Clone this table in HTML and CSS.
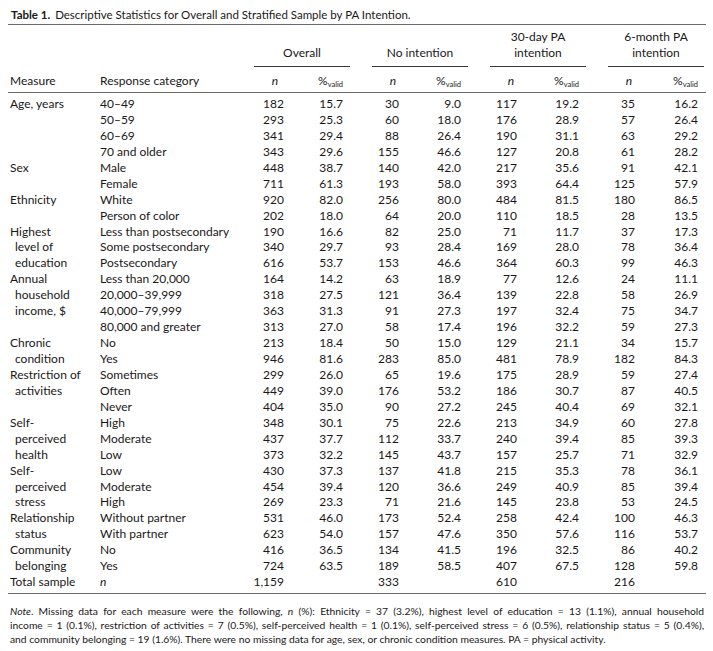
FILE: index.html
```html
<!DOCTYPE html>
<html lang="en">
<head>
<meta charset="utf-8">
<title>Table 1</title>
<link rel="stylesheet" href="styles.css">
</head>
<body>
<div class="page">
  <div class="caption"><span class="label">Table 1.</span> Descriptive Statistics for Overall and Stratified Sample by PA Intention.</div>
  <table class="stats">
    <colgroup>
      <col class="c-measure"><col class="c-cat">
      <col class="c-grp"><col class="c-grp">
      <col class="c-grp"><col class="c-grp">
      <col class="c-grp"><col class="c-grp">
      <col class="c-grp"><col class="c-last">
    </colgroup>
    <thead>
      <tr class="grp-row">
        <th></th><th></th>
        <th colspan="2" class="grp"><div class="grp-in">Overall</div></th>
        <th colspan="2" class="grp"><div class="grp-in">No intention</div></th>
        <th colspan="2" class="grp"><div class="grp-in">30-day PA<br>intention</div></th>
        <th colspan="2" class="grp grp-last"><div class="grp-in">6-month PA<br>intention</div></th>
      </tr>
      <tr class="sub-row">
        <th class="measure">Measure</th>
        <th class="cat">Response category</th>
        <th class="hn"><i>n</i></th><th class="hp">%<sub>valid</sub></th>
        <th class="hn"><i>n</i></th><th class="hp">%<sub>valid</sub></th>
        <th class="hn"><i>n</i></th><th class="hp">%<sub>valid</sub></th>
        <th class="hn"><i>n</i></th><th class="hp last">%<sub>valid</sub></th>
      </tr>
    </thead>
    <tbody>
      <tr class="first"><td class="measure">Age, years</td><td class="cat">40–49</td><td class="n n1">182</td><td class="p">15.7</td><td class="n">30</td><td class="p">9.0</td><td class="n">117</td><td class="p">19.2</td><td class="n">35</td><td class="p last">16.2</td></tr>
      <tr><td class="measure"></td><td class="cat">50–59</td><td class="n n1">293</td><td class="p">25.3</td><td class="n">60</td><td class="p">18.0</td><td class="n">176</td><td class="p">28.9</td><td class="n">57</td><td class="p last">26.4</td></tr>
      <tr><td class="measure"></td><td class="cat">60–69</td><td class="n n1">341</td><td class="p">29.4</td><td class="n">88</td><td class="p">26.4</td><td class="n">190</td><td class="p">31.1</td><td class="n">63</td><td class="p last">29.2</td></tr>
      <tr><td class="measure"></td><td class="cat">70 and older</td><td class="n n1">343</td><td class="p">29.6</td><td class="n">155</td><td class="p">46.6</td><td class="n">127</td><td class="p">20.8</td><td class="n">61</td><td class="p last">28.2</td></tr>
      <tr><td class="measure">Sex</td><td class="cat">Male</td><td class="n n1">448</td><td class="p">38.7</td><td class="n">140</td><td class="p">42.0</td><td class="n">217</td><td class="p">35.6</td><td class="n">91</td><td class="p last">42.1</td></tr>
      <tr><td class="measure"></td><td class="cat">Female</td><td class="n n1">711</td><td class="p">61.3</td><td class="n">193</td><td class="p">58.0</td><td class="n">393</td><td class="p">64.4</td><td class="n">125</td><td class="p last">57.9</td></tr>
      <tr><td class="measure">Ethnicity</td><td class="cat">White</td><td class="n n1">920</td><td class="p">82.0</td><td class="n">256</td><td class="p">80.0</td><td class="n">484</td><td class="p">81.5</td><td class="n">180</td><td class="p last">86.5</td></tr>
      <tr><td class="measure"></td><td class="cat">Person of color</td><td class="n n1">202</td><td class="p">18.0</td><td class="n">64</td><td class="p">20.0</td><td class="n">110</td><td class="p">18.5</td><td class="n">28</td><td class="p last">13.5</td></tr>
      <tr><td class="measure">Highest</td><td class="cat">Less than postsecondary</td><td class="n n1">190</td><td class="p">16.6</td><td class="n">82</td><td class="p">25.0</td><td class="n">71</td><td class="p">11.7</td><td class="n">37</td><td class="p last">17.3</td></tr>
      <tr><td class="measure cont">level of</td><td class="cat">Some postsecondary</td><td class="n n1">340</td><td class="p">29.7</td><td class="n">93</td><td class="p">28.4</td><td class="n">169</td><td class="p">28.0</td><td class="n">78</td><td class="p last">36.4</td></tr>
      <tr><td class="measure cont">education</td><td class="cat">Postsecondary</td><td class="n n1">616</td><td class="p">53.7</td><td class="n">153</td><td class="p">46.6</td><td class="n">364</td><td class="p">60.3</td><td class="n">99</td><td class="p last">46.3</td></tr>
      <tr><td class="measure">Annual</td><td class="cat">Less than 20,000</td><td class="n n1">164</td><td class="p">14.2</td><td class="n">63</td><td class="p">18.9</td><td class="n">77</td><td class="p">12.6</td><td class="n">24</td><td class="p last">11.1</td></tr>
      <tr><td class="measure cont">household</td><td class="cat">20,000–39,999</td><td class="n n1">318</td><td class="p">27.5</td><td class="n">121</td><td class="p">36.4</td><td class="n">139</td><td class="p">22.8</td><td class="n">58</td><td class="p last">26.9</td></tr>
      <tr><td class="measure cont">income, $</td><td class="cat">40,000–79,999</td><td class="n n1">363</td><td class="p">31.3</td><td class="n">91</td><td class="p">27.3</td><td class="n">197</td><td class="p">32.4</td><td class="n">75</td><td class="p last">34.7</td></tr>
      <tr><td class="measure"></td><td class="cat">80,000 and greater</td><td class="n n1">313</td><td class="p">27.0</td><td class="n">58</td><td class="p">17.4</td><td class="n">196</td><td class="p">32.2</td><td class="n">59</td><td class="p last">27.3</td></tr>
      <tr><td class="measure">Chronic</td><td class="cat">No</td><td class="n n1">213</td><td class="p">18.4</td><td class="n">50</td><td class="p">15.0</td><td class="n">129</td><td class="p">21.1</td><td class="n">34</td><td class="p last">15.7</td></tr>
      <tr><td class="measure cont">condition</td><td class="cat">Yes</td><td class="n n1">946</td><td class="p">81.6</td><td class="n">283</td><td class="p">85.0</td><td class="n">481</td><td class="p">78.9</td><td class="n">182</td><td class="p last">84.3</td></tr>
      <tr><td class="measure">Restriction of</td><td class="cat">Sometimes</td><td class="n n1">299</td><td class="p">26.0</td><td class="n">65</td><td class="p">19.6</td><td class="n">175</td><td class="p">28.9</td><td class="n">59</td><td class="p last">27.4</td></tr>
      <tr><td class="measure cont">activities</td><td class="cat">Often</td><td class="n n1">449</td><td class="p">39.0</td><td class="n">176</td><td class="p">53.2</td><td class="n">186</td><td class="p">30.7</td><td class="n">87</td><td class="p last">40.5</td></tr>
      <tr><td class="measure"></td><td class="cat">Never</td><td class="n n1">404</td><td class="p">35.0</td><td class="n">90</td><td class="p">27.2</td><td class="n">245</td><td class="p">40.4</td><td class="n">69</td><td class="p last">32.1</td></tr>
      <tr><td class="measure">Self-</td><td class="cat">High</td><td class="n n1">348</td><td class="p">30.1</td><td class="n">75</td><td class="p">22.6</td><td class="n">213</td><td class="p">34.9</td><td class="n">60</td><td class="p last">27.8</td></tr>
      <tr><td class="measure cont">perceived</td><td class="cat">Moderate</td><td class="n n1">437</td><td class="p">37.7</td><td class="n">112</td><td class="p">33.7</td><td class="n">240</td><td class="p">39.4</td><td class="n">85</td><td class="p last">39.3</td></tr>
      <tr><td class="measure cont">health</td><td class="cat">Low</td><td class="n n1">373</td><td class="p">32.2</td><td class="n">145</td><td class="p">43.7</td><td class="n">157</td><td class="p">25.7</td><td class="n">71</td><td class="p last">32.9</td></tr>
      <tr><td class="measure">Self-</td><td class="cat">Low</td><td class="n n1">430</td><td class="p">37.3</td><td class="n">137</td><td class="p">41.8</td><td class="n">215</td><td class="p">35.3</td><td class="n">78</td><td class="p last">36.1</td></tr>
      <tr><td class="measure cont">perceived</td><td class="cat">Moderate</td><td class="n n1">454</td><td class="p">39.4</td><td class="n">120</td><td class="p">36.6</td><td class="n">249</td><td class="p">40.9</td><td class="n">85</td><td class="p last">39.4</td></tr>
      <tr><td class="measure cont">stress</td><td class="cat">High</td><td class="n n1">269</td><td class="p">23.3</td><td class="n">71</td><td class="p">21.6</td><td class="n">145</td><td class="p">23.8</td><td class="n">53</td><td class="p last">24.5</td></tr>
      <tr><td class="measure">Relationship</td><td class="cat">Without partner</td><td class="n n1">531</td><td class="p">46.0</td><td class="n">173</td><td class="p">52.4</td><td class="n">258</td><td class="p">42.4</td><td class="n">100</td><td class="p last">46.3</td></tr>
      <tr><td class="measure cont">status</td><td class="cat">With partner</td><td class="n n1">623</td><td class="p">54.0</td><td class="n">157</td><td class="p">47.6</td><td class="n">350</td><td class="p">57.6</td><td class="n">116</td><td class="p last">53.7</td></tr>
      <tr><td class="measure">Community</td><td class="cat">No</td><td class="n n1">416</td><td class="p">36.5</td><td class="n">134</td><td class="p">41.5</td><td class="n">196</td><td class="p">32.5</td><td class="n">86</td><td class="p last">40.2</td></tr>
      <tr><td class="measure cont">belonging</td><td class="cat">Yes</td><td class="n n1">724</td><td class="p">63.5</td><td class="n">189</td><td class="p">58.5</td><td class="n">407</td><td class="p">67.5</td><td class="n">128</td><td class="p last">59.8</td></tr>
      <tr class="total"><td class="measure">Total sample</td><td class="cat"><i>n</i></td><td class="n n1">1,159</td><td class="p"></td><td class="n">333</td><td class="p"></td><td class="n">610</td><td class="p"></td><td class="n">216</td><td class="p last"></td></tr>
    </tbody>
  </table>
  <p class="note"><span class="note-line just"><i>Note</i>. Missing data for each measure were the following, <i>n</i> (%): Ethnicity = 37 (3.2%), highest level of education = 13 (1.1%), annual household</span><span class="note-line just">income = 1 (0.1%), restriction of activities = 7 (0.5%), self-perceived health = 1 (0.1%), self-perceived stress = 6 (0.5%), relationship status = 5 (0.4%),</span><span class="note-line">and community belonging = 19 (1.6%). There were no missing data for age, sex, or chronic condition measures. PA = physical activity.</span></p>
</div>
</body>
</html>
```
FILE: styles.css
```css
html, body {
  margin: 0;
  padding: 0;
  background: #ffffff;
}
body {
  font-family: Lato, "Open Sans", "DejaVu Sans", sans-serif;
  color: #1a1718;
}
.page {
  padding: 6px 7px 0 8px;
}
.caption {
  font-size: 11.5px;
  line-height: 18px;
  padding-left: 3px;
  border-bottom: 1px solid #6a6a6a;
}
.caption .label {
  font-weight: 700;
  margin-right: 2px;
}
.stats {
  width: 698px;
  border-collapse: collapse;
  table-layout: fixed;
  font-size: 12px;
}
.c-measure { width: 90px; }
.c-cat { width: 145px; }
.c-grp { width: 59px; }
.c-last { width: 50px; }
.stats th, .stats td {
  padding: 0;
  font-weight: 400;
  line-height: 15.93px;
  white-space: nowrap;
}
.grp-row th {
  vertical-align: bottom;
  padding-top: 4px;
  padding-bottom: 0;
}
.grp-in {
  margin: 0 11px;
  text-align: center;
  line-height: 16px;
  border-bottom: 1px solid #3a3a3a;
  padding-bottom: 5px;
}
.grp-last .grp-in {
  margin-right: 2px;
}
.sub-row th {
  padding-top: 6px;
  padding-bottom: 3px;
  line-height: 16px;
  border-bottom: 1px solid #6a6a6a;
}
.measure {
  text-align: left;
  padding-left: 2px !important;
}
.measure.cont {
  padding-left: 7px !important;
}
.cat {
  text-align: left;
  padding-left: 2px !important;
}
.hn {
  text-align: right;
  padding-right: 24px !important;
}
.hp, .p, .n {
  text-align: right;
}
.n { padding-right: 21px !important; }
.n.n1 { padding-right: 18px !important; }
.hp, .p { padding-right: 18px !important; }
.hp.last, .p.last { padding-right: 8px !important; }
.hn i, .cat i {
  font-style: italic;
}
sub {
  font-size: 7.5px;
  vertical-align: -2px;
  line-height: 0;
}
tbody tr.first td {
  padding-top: 3px;
}
tbody tr.total td {
  padding-bottom: 3px;
  border-bottom: 1px solid #6a6a6a;
}
.note {
  margin: 10px 0 0 0;
  padding: 0 2px;
  font-size: 10.3px;
  line-height: 14px;
}
.note-line {
  display: block;
  white-space: nowrap;
}
.note-line.just {
  white-space: normal;
  text-align: justify;
  text-align-last: justify;
}
```
